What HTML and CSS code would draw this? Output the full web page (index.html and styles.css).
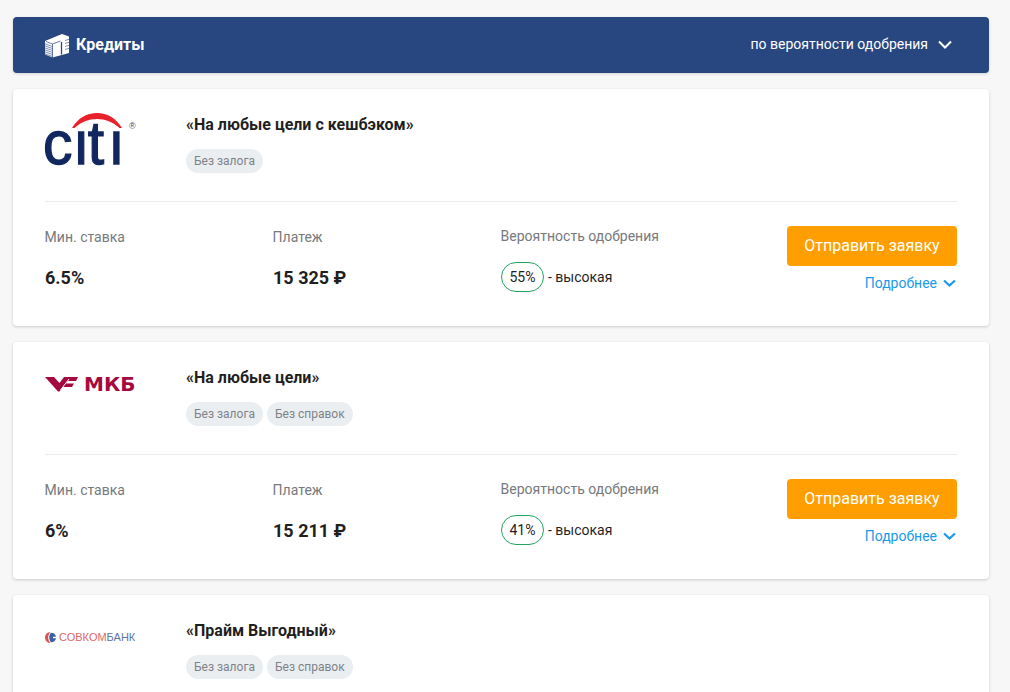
FILE: index.html
```html
<!DOCTYPE html>
<html lang="ru">
<head>
<meta charset="utf-8">
<title>Кредиты</title>
<link rel="stylesheet" href="styles.css">
</head>
<body>
<main class="page">
  <header class="bar">
    <div class="bar-title">
      <svg class="bar-icon" width="26" height="25" viewBox="0 0 26 25" aria-hidden="true">
        <path fill="#fff" d="M1 8 18 1l7 2.500V20L8.500 24.500 1 21.500z"/>
        <g fill="none" stroke="#28467f">
          <path stroke-width=".6" d="M0 10.500 8.500 13.500M0 12.500 8.500 15.500M0 14.500 8.500 17.500M0 16.500 8.500 19.500M0 18.500 8.500 21.500M0 20.500 8.500 23.500"/>
          <path stroke-width=".7" d="M2 8.500 8.500 11 16.500 8M8.500 11V25"/>
          <path stroke-width="1.300" d="M17.500 9V21.500"/>
          <path stroke-width=".6" d="M21 7.500 26 6M21 10.500 26 9M21 13.500 26 12M21 16.500 26 15"/>
        </g>
      </svg>
      <span>Кредиты</span>
    </div>
    <div class="bar-sort">
      <span>по вероятности одобрения</span>
      <svg width="14" height="9" viewBox="0 0 14 9" aria-hidden="true"><path d="M1 1.500 7 7.500 13 1.500" fill="none" stroke="#fff" stroke-width="2"/></svg>
    </div>
  </header>

  <article class="card">
    <div class="card-top">
      <div class="logo">
        <svg class="citi" width="92" height="56" viewBox="0 0 92 56" role="img">
          <path fill="#e8212b" d="M27 17C33 7 42 2 52 2S71 7 77 17L74.500 17C68 11 60 8 52 8S36 11 29.500 17z"/>
          <text class="citi-word" transform="scale(.95 1)" x="-2 29.500 45 66.500" y="53">cıtı</text>
          <text class="citi-reg" x="84" y="18">®</text>
        </svg>
      </div>
      <div class="offer">
        <h2 class="offer-title">«На любые цели с кешбэком»</h2>
        <div class="tags"><span class="tag">Без залога</span></div>
      </div>
    </div>
    <div class="stats">
      <div class="stat"><div class="stat-label">Мин. ставка</div><div class="stat-value">6.5%</div></div>
      <div class="stat"><div class="stat-label">Платеж</div><div class="stat-value">15 325 ₽</div></div>
      <div class="stat stat-chance"><div class="stat-label">Вероятность одобрения</div><div class="chance"><span class="chance-pill">55%</span><span>- высокая</span></div></div>
      <div class="actions">
        <button class="apply" type="button">Отправить заявку</button>
        <a class="more" href="#">Подробнее <svg width="13" height="8" viewBox="0 0 13 8" aria-hidden="true"><path d="M1 1.500 6.500 6.500 12 1.500" fill="none" stroke="#1a9ae8" stroke-width="2.200"/></svg></a>
      </div>
    </div>
  </article>

  <article class="card">
    <div class="card-top">
      <div class="logo logo-mkb">
        <svg width="33" height="16" viewBox="0 0 33 16" aria-hidden="true">
          <path fill="#a6093d" d="M0 1H9L14.500 7 19 1H33L31 5H23L21 7.500H29L27 11H18L14.500 15.500H13z"/>
          <path fill="none" stroke="#fff" stroke-width="1" d="M15.500 14 24 3"/>
        </svg>
        <span class="mkb-word">МКБ</span>
      </div>
      <div class="offer">
        <h2 class="offer-title">«На любые цели»</h2>
        <div class="tags"><span class="tag">Без залога</span><span class="tag">Без справок</span></div>
      </div>
    </div>
    <div class="stats">
      <div class="stat"><div class="stat-label">Мин. ставка</div><div class="stat-value">6%</div></div>
      <div class="stat"><div class="stat-label">Платеж</div><div class="stat-value">15 211 ₽</div></div>
      <div class="stat stat-chance"><div class="stat-label">Вероятность одобрения</div><div class="chance"><span class="chance-pill">41%</span><span>- высокая</span></div></div>
      <div class="actions">
        <button class="apply" type="button">Отправить заявку</button>
        <a class="more" href="#">Подробнее <svg width="13" height="8" viewBox="0 0 13 8" aria-hidden="true"><path d="M1 1.500 6.500 6.500 12 1.500" fill="none" stroke="#1a9ae8" stroke-width="2.200"/></svg></a>
      </div>
    </div>
  </article>

  <article class="card">
    <div class="card-top">
      <div class="logo logo-sovcom">
        <svg width="11" height="11" viewBox="0 0 11 11" aria-hidden="true">
          <path fill="#dc5052" d="M5.500 0A5.500 5.500 0 1 0 5.500 11C4 9.500 3.200 7.500 3.200 5.500S4 1.500 5.500 0z"/>
          <path fill="#3b64a6" d="M6 .700A5 5 0 0 1 11 4.700H8V6.300H11A5 5 0 0 1 6 10.300C4.800 9 4.200 7.300 4.200 5.500S4.800 2 6 .700z"/>
        </svg>
        <span class="sovcom-word"><span class="sovcom-red">СОВКОМ</span><span class="sovcom-blue">БАНК</span></span>
      </div>
      <div class="offer">
        <h2 class="offer-title">«Прайм Выгодный»</h2>
        <div class="tags"><span class="tag">Без залога</span><span class="tag">Без справок</span></div>
      </div>
    </div>
  </article>
</main>
</body>
</html>
```

FILE: styles.css
```css
* { box-sizing: border-box; }
html, body { margin: 0; height: 692px; overflow: hidden; }
body { background: #f7f7f7; font-family: Roboto, "Noto Sans", sans-serif; color: #1f1f1f; }
.page { padding: 17px 21px 0 13px; display: flex; flex-direction: column; gap: 16px; }

.bar { height: 56px; flex: none; background: #28467f; border-radius: 4px; box-shadow: 0 1px 3px rgba(0,0,0,.15); color: #fff; display: flex; align-items: center; justify-content: space-between; padding: 0 37px 2px 31px; }
.bar-title { display: flex; align-items: center; gap: 6px; font-size: 16px; font-weight: 700; }
.bar-icon { margin-top: 2px; }
.bar-sort { display: flex; align-items: center; gap: 10px; font-size: 14px; }

.card { flex: none; height: 237px; background: #fff; border-radius: 4px; box-shadow: 0 1px 3px rgba(0,0,0,.18); padding: 0 32px; }
.card-top { height: 113px; display: flex; border-bottom: 1px solid #ececec; }
.logo { width: 141px; flex: none; }
.offer { padding-top: 26px; }
.offer-title { margin: 0 0 15px; font-size: 16px; line-height: 19px; font-weight: 700; color: #1f1f1f; }
.tags { display: flex; gap: 4px; }
.tag { height: 24px; line-height: 24px; padding: 0 8px; border-radius: 12px; background: #ebeef1; color: #7d8288; font-size: 12px; }

.citi { display: block; margin-top: 22px; overflow: visible; }
.citi-word { font-family: "Liberation Sans", sans-serif; font-size: 62px; fill: #12275f; stroke: #12275f; stroke-width: 1.300; }
.citi-reg { font-family: "Liberation Sans", sans-serif; font-size: 9px; fill: #3b4a7a; }

.logo-mkb { display: flex; align-items: center; gap: 6px; height: 84px; }
.mkb-word { font-family: "DejaVu Sans", sans-serif; font-weight: 700; font-size: 20px; color: #a6093d; }

.logo-sovcom { display: flex; align-items: center; gap: 3px; height: 84px; }
.sovcom-word { font-family: "Liberation Sans", sans-serif; font-size: 11px; }
.sovcom-red { color: #e0666a; }
.sovcom-blue { color: #5d74a8; }

.stats { display: flex; padding-top: 24px; }
.stat { width: 228px; flex: none; }
.stat-label { font-size: 14px; line-height: 22px; color: #76797d; margin-left: -.4px; }
.stat-chance .stat-label { margin-top: -1px; margin-bottom: 1px; }
.stat-value { margin-top: 19px; font-size: 18px; line-height: 22px; font-weight: 700; color: #1f1f1f; }
.chance { margin-top: 15px; display: flex; align-items: center; gap: 4px; font-size: 14px; }
.chance-pill { width: 43px; height: 30px; line-height: 28px; text-align: center; border: 1px solid #1fa55f; border-radius: 15px; }
.actions { margin-left: auto; width: 170px; display: flex; flex-direction: column; align-items: flex-end; }
.apply { width: 170px; height: 40px; border: 0; border-radius: 4px; background: #ff9e01; color: #fff; font: 400 16px Roboto, sans-serif; padding: 0 0 2px; }
.more { margin-top: 8px; margin-right: 1px; display: flex; align-items: center; gap: 6px; font-size: 14px; line-height: 18px; color: #1a9ae8; text-decoration: none; }
```
